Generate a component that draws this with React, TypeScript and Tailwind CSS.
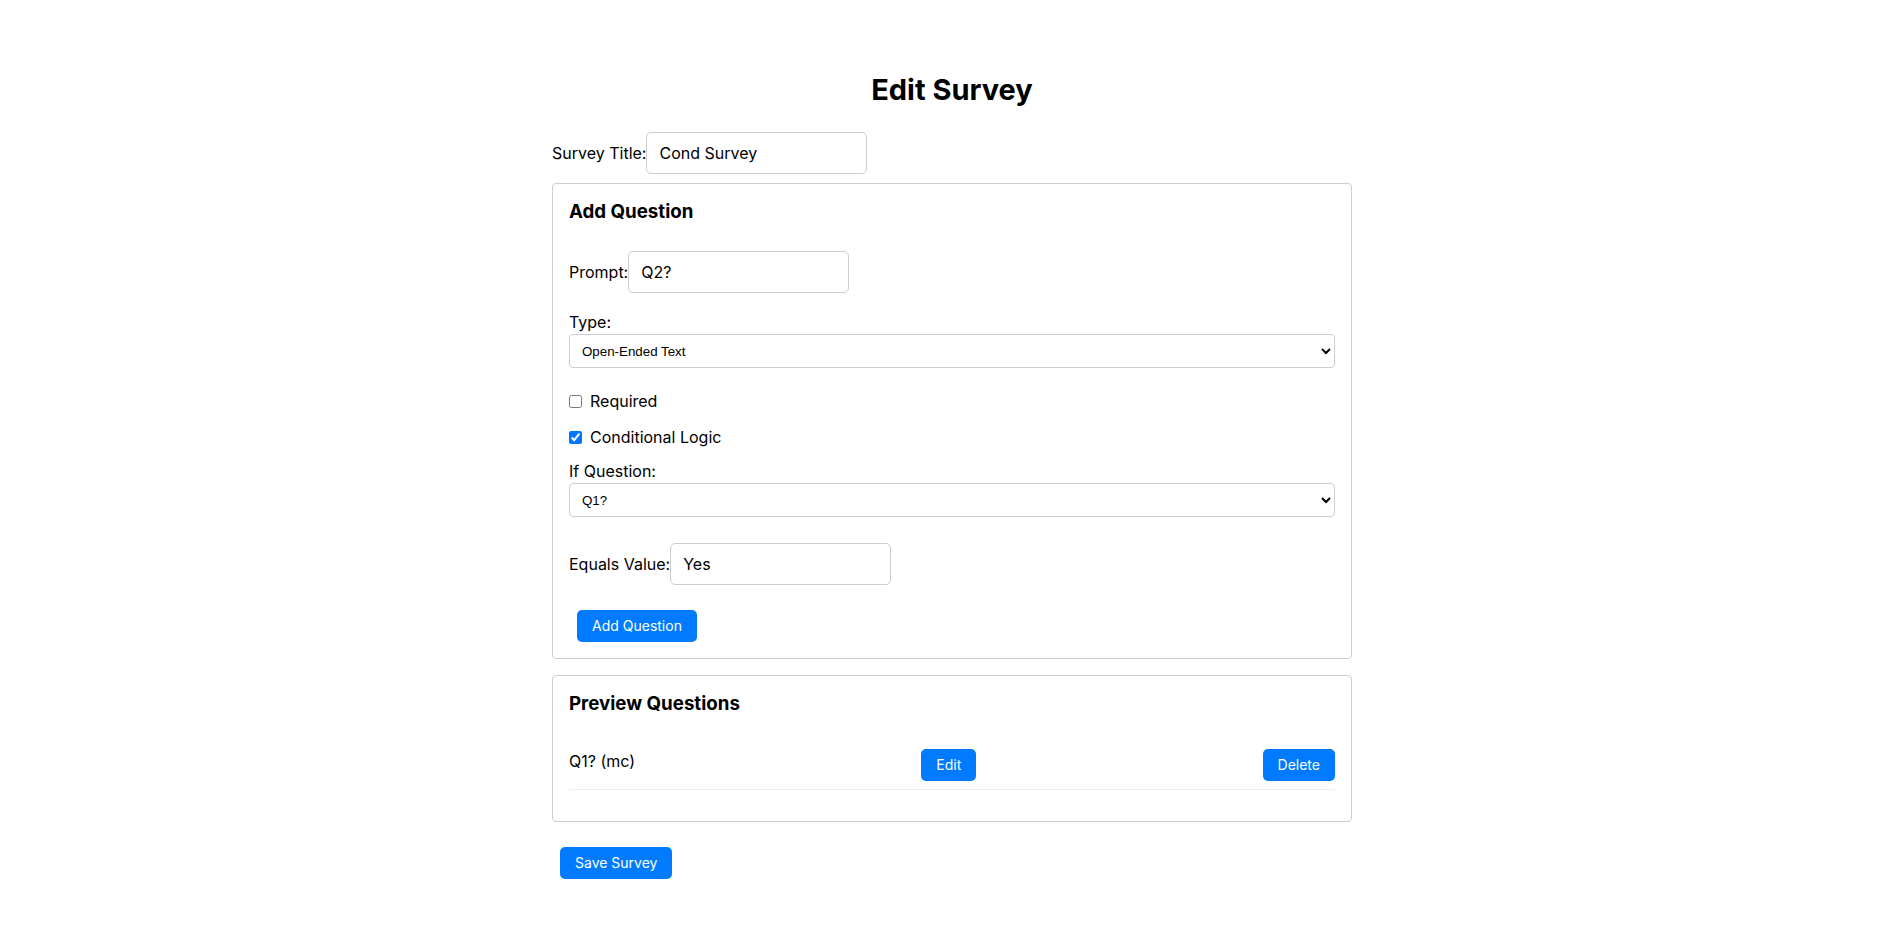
import { useState } from 'react'

const inputCls =
  'h-[42px] w-[221px] rounded-[5px] border border-[#ccc] bg-white px-3 text-[16px] text-black outline-none'
const selectCls =
  'block h-[34px] w-full rounded-[4px] border border-[#ccc] bg-white px-2 text-[13.33px] text-black outline-none [font-family:Arial,"Liberation_Sans",sans-serif]'
const btnCls =
  'h-8 rounded-[5px] bg-[#007bff] px-[15px] text-[14px] font-normal leading-4 text-white'

export default function App() {
  const [title, setTitle] = useState('Cond Survey')
  const [prompt, setPrompt] = useState('Q2?')
  const [type, setType] = useState('text')
  const [required, setRequired] = useState(false)
  const [conditional, setConditional] = useState(true)
  const [ifQuestion, setIfQuestion] = useState('q1')
  const [equals, setEquals] = useState('Yes')

  return (
    <div className="min-h-screen bg-white text-black [font-family:Inter,'Noto_Sans',sans-serif]">
      <div className="mx-auto w-[800px] pb-10">
        <h1 className="pt-[72px] text-center text-[29px] font-bold leading-[36px]">Edit Survey</h1>

        <div className="mt-[24px] flex items-center text-[16px]">
          <label>Survey Title:</label>
          <input className={inputCls} value={title} onChange={(e) => setTitle(e.target.value)} />
        </div>

        {/* add question */}
        <div className="mt-[9px] rounded-[4px] border border-[#ccc] p-4">
          <h3 className="text-[18.72px] font-bold leading-[23px]">Add Question</h3>

          <div className="mt-[28px] flex items-center text-[16px]">
            <label>Prompt:</label>
            <input className={inputCls} value={prompt} onChange={(e) => setPrompt(e.target.value)} />
          </div>

          <label className="mt-[17px] block text-[16px] leading-6">Type:</label>
          <select className={selectCls} value={type} onChange={(e) => setType(e.target.value)}>
            <option value="text">Open-Ended Text</option>
            <option value="mc">Multiple Choice</option>
            <option value="rating">Rating</option>
          </select>

          <label className="mt-[21px] flex items-center text-[16px] leading-6">
            <input
              type="checkbox"
              className="mr-2 h-[13px] w-[13px]"
              checked={required}
              onChange={(e) => setRequired(e.target.checked)}
            />
            Required
          </label>

          <label className="mt-[12px] flex items-center text-[16px] leading-6">
            <input
              type="checkbox"
              className="mr-2 h-[13px] w-[13px]"
              checked={conditional}
              onChange={(e) => setConditional(e.target.checked)}
            />
            Conditional Logic
          </label>

          <label className="mt-[10px] block text-[16px] leading-6">If Question:</label>
          <select className={selectCls} value={ifQuestion} onChange={(e) => setIfQuestion(e.target.value)}>
            <option value="q1">Q1?</option>
          </select>

          <div className="mt-[26px] flex items-center text-[16px]">
            <label>Equals Value:</label>
            <input
              autoFocus
              className={inputCls}
              value={equals}
              onChange={(e) => setEquals(e.target.value)}
            />
          </div>

          <button className={btnCls + ' mt-[25px] ml-2'}>Add Question</button>
        </div>

        {/* preview */}
        <div className="mt-[16px] rounded-[4px] border border-[#ccc] p-4">
          <h3 className="text-[18.72px] font-bold leading-[23px]">Preview Questions</h3>
          <ul className="mt-[26px] mb-[15px]">
            <li className="flex justify-between border-b border-[#eee] py-2 text-[16px]">
              <span className="leading-6">Q1? (mc)</span>
              <button className={btnCls}>Edit</button>
              <button className={btnCls}>Delete</button>
            </li>
          </ul>
        </div>

        <button className={btnCls + ' mt-[25px] ml-2'}>Save Survey</button>
      </div>
    </div>
  )
}
